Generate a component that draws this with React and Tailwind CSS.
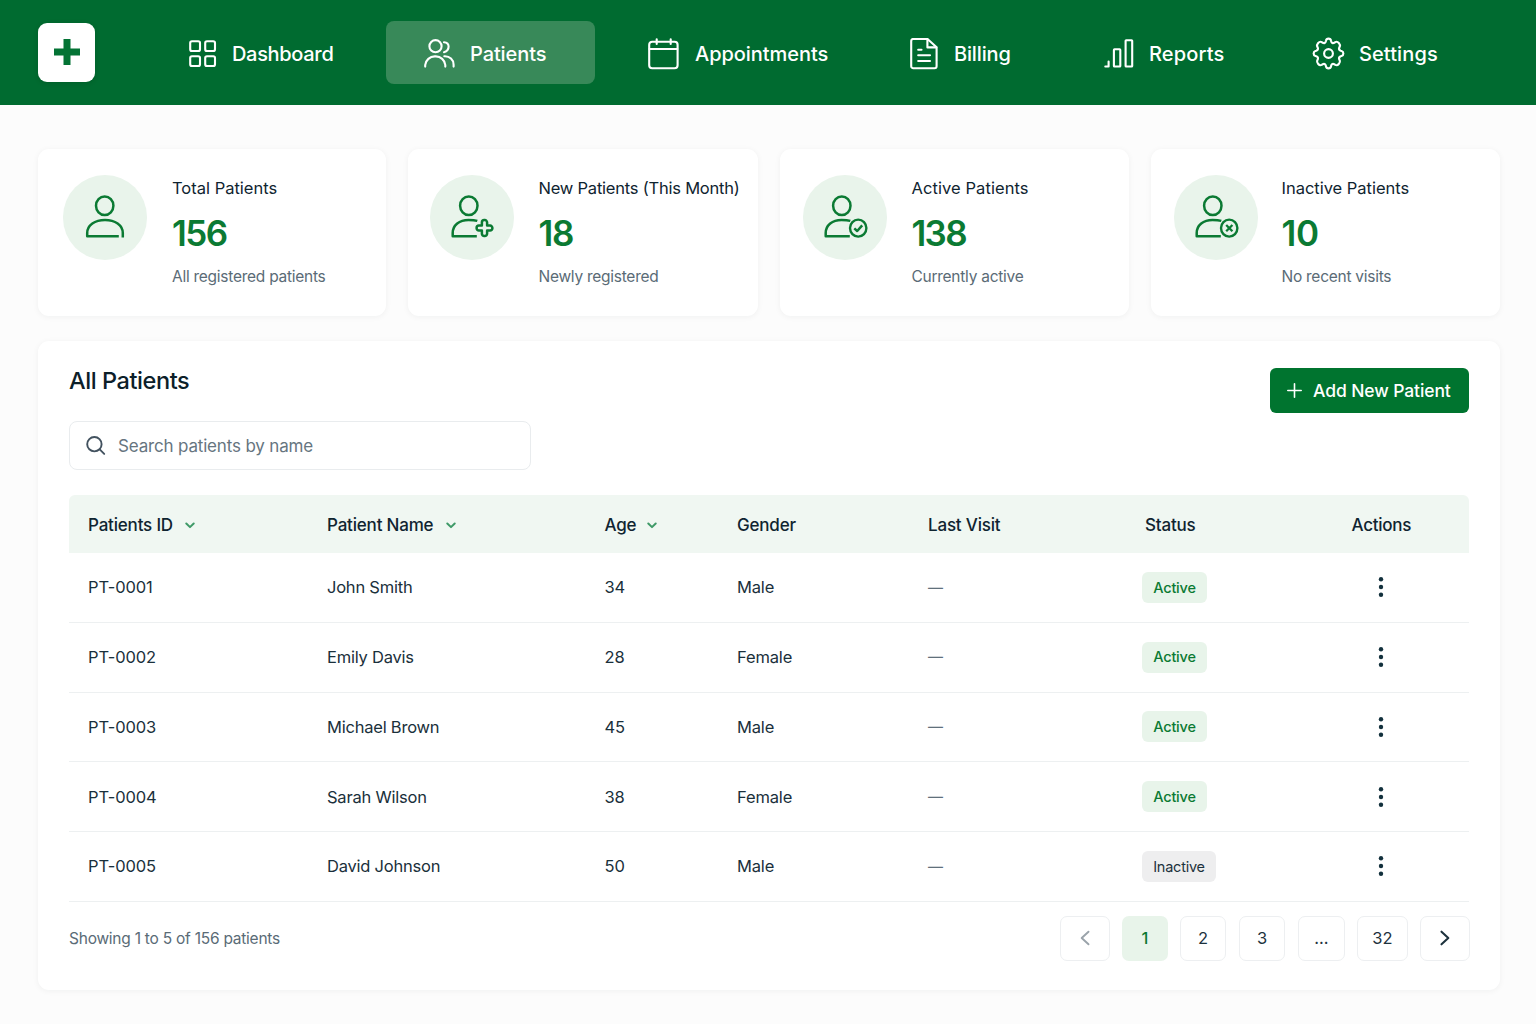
import React from "react";

const line = {
  fill: "none",
  stroke: "currentColor",
  strokeLinecap: "round",
  strokeLinejoin: "round",
};

const DashboardIcon = () => (
  <svg width="28" height="28" viewBox="0 0 28 28" {...line} strokeWidth="2.1">
    <rect x="1.2" y="1.2" width="9.8" height="9.8" rx="1.8" />
    <rect x="16.2" y="1.2" width="9.8" height="9.8" rx="1.8" />
    <rect x="1.2" y="16.2" width="9.8" height="9.8" rx="1.8" />
    <rect x="16.2" y="16.2" width="9.8" height="9.8" rx="1.8" />
  </svg>
);

const PatientsIcon = () => (
  <svg width="31" height="29" viewBox="0 0 31 29" {...line} strokeWidth="2.1">
    <circle cx="11.5" cy="7.2" r="6.1" />
    <path d="M1.2 27.6V26a9.6 9.6 0 0 1 9.6-8.6h1A9.6 9.6 0 0 1 21.3 26v1.6" />
    <path d="M20 3.2c3 .2 4.6 1.9 4.6 4.4 0 2.6-1.6 4.8-4.6 5.6" />
    <path d="M20.3 17.3c5.5-.3 9.3 3.4 9.3 8.4v1.9" />
  </svg>
);

const CalendarIcon = () => (
  <svg width="31" height="32" viewBox="0 0 31 32" {...line} strokeWidth="2.1">
    <rect x="1.2" y="3.7" width="28.4" height="26.5" rx="3" />
    <path d="M1.5 11H29.3M8.7 1.2V5.9M22.7 1.2V5.9" />
  </svg>
);

const BillingIcon = () => (
  <svg width="28" height="32" viewBox="0 0 28 32" {...line} strokeWidth="2.1" className="-ml-[1px]">
    <path d="M3.2 1H17.5L26.6 9.3V28.2a2 2 0 0 1-2 2H3.2a2 2 0 0 1-2-2V3a2 2 0 0 1 2-2Z" />
    <path d="M17.4 1.3V9.4H26.3M8.2 11.7H11.5M8.2 17.2H20M8.2 23H20" />
  </svg>
);

const ReportsIcon = () => (
  <svg width="30" height="29" viewBox="0 0 30 29" {...line} strokeWidth="2.1">
    <path d="M1.3 27.5H4.6V22.5" />
    <rect x="9.9" y="10.3" width="6.4" height="17.2" rx=".6" />
    <rect x="21.6" y="1.2" width="6.6" height="26.3" rx=".6" />
  </svg>
);

const SettingsIcon = () => (
  <svg width="33" height="33" viewBox="0 0 24 24" {...line} strokeWidth="1.55" className="-ml-[1px] -mt-[1px]">
    <path d="M10.15 2.7Q10.4 1.2 12 1.2T13.85 2.7L14 3.3Q14.6 4.9 16.2 4.2L16.9 3.7Q18.3 3 19.5 4.3T20.2 7L19.8 7.7Q19.2 9.4 20.9 10L21.5 10.15Q22.8 10.5 22.8 12T21.5 13.85L20.9 14Q19.2 14.6 19.8 16.3L20.2 17Q20.7 18.4 19.5 19.7T16.9 20.3L16.2 19.8Q14.6 19.1 14 20.7L13.85 21.3Q13.6 22.8 12 22.8T10.15 21.3L10 20.7Q9.4 19.1 7.8 19.8L7.1 20.3Q5.7 21 4.5 19.7T3.8 17L4.2 16.3Q4.8 14.6 3.1 14L2.5 13.85Q1.2 13.5 1.2 12T2.5 10.15L3.1 10Q4.8 9.4 4.2 7.7L3.8 7Q3.3 5.6 4.5 4.3T7.1 3.7L7.8 4.2Q9.4 4.9 10 3.3Z" />
    <circle cx="12" cy="12" r="3.2" />
  </svg>
);

function PersonIcon({ kind }) {
  if (kind === "total") {
    return (
      <svg width="84" height="85" viewBox="0 0 84 85" {...line} strokeWidth="2.5" strokeLinecap="butt">
        <ellipse cx="41.7" cy="30.7" rx="8.7" ry="9.3" />
        <path d="M59.8 62.4V58C59.8 50 52 44.9 42 44.9S24.2 50 24.2 58V61.2H55.8" />
      </svg>
    );
  }
  return (
    <svg width="84" height="85" viewBox="0 0 84 85" {...line} strokeWidth="2.5" strokeLinecap="butt">
      <ellipse cx="38.8" cy="30.7" rx="8.7" ry="9.3" />
      <path d="M47.3 45.9C44.5 45 41.5 44.9 38.5 44.9C29.5 44.9 22.7 50 22.7 58V61.2H46.8" />
      {kind === "new" && (
        <path
          strokeWidth="2.5"
          d="M51.9 47.4a2.3 2.3 0 0 1 2.3-2.3h.6a2.3 2.3 0 0 1 2.3 2.3v3.2h3a2.3 2.3 0 0 1 2.3 2.3v.4a2.3 2.3 0 0 1-2.3 2.3h-3v3.2a2.3 2.3 0 0 1-2.3 2.3h-.6a2.3 2.3 0 0 1-2.3-2.3v-3.2h-3a2.3 2.3 0 0 1-2.3-2.3v-.4a2.3 2.3 0 0 1 2.3-2.3h3Z"
        />
      )}
      {kind !== "new" && <ellipse cx="55.2" cy="53.1" rx="8.2" ry="8.5" strokeWidth="2.4" />}
      {kind === "active" && <path d="M51.3 53.4L54.2 56L59.2 50.4" strokeWidth="2.5" />}
      {kind === "inactive" && <path d="M52.2 50L58.4 56.2M58.4 50L52.2 56.2" strokeWidth="2.3" />}
    </svg>
  );
}

const NAV = [
  { label: "Dashboard", Icon: DashboardIcon, slot: "w-[43px]", track: "tracking-[-0.32px]" },
  { label: "Patients", Icon: PatientsIcon, slot: "w-[46px]", track: "tracking-[-0.1px]", active: true },
  { label: "Appointments", Icon: CalendarIcon, slot: "w-[47px]", track: "tracking-[-0.05px]" },
  { label: "Billing", Icon: BillingIcon, slot: "w-[43px]", track: "tracking-[-0.15px]" },
  { label: "Reports", Icon: ReportsIcon, slot: "w-[45px]", track: "tracking-[0.15px]" },
  { label: "Settings", Icon: SettingsIcon, slot: "w-[46px]", track: "tracking-[0.1px]" },
];

const STATS = [
  { kind: "total", label: "Total Patients", value: "156", note: "All registered patients", pad: "pl-[24.5px]", gap: "ml-[25.5px]", track: "tracking-[0px]", vt: "tracking-[-1.5px]" },
  { kind: "new", label: "New Patients (This Month)", value: "18", note: "Newly registered", pad: "pl-[21.5px]", gap: "ml-[25px]", track: "tracking-[-0.22px]", vt: "tracking-[-1.2px]" },
  { kind: "active", label: "Active Patients", value: "138", note: "Currently active", pad: "pl-[23.2px]", gap: "ml-[24.3px]", track: "tracking-[0.08px]", vt: "tracking-[-1.7px]" },
  { kind: "inactive", label: "Inactive Patients", value: "10", note: "No recent visits", pad: "pl-[22.5px]", gap: "ml-[24px]", track: "tracking-[-0.02px]", vt: "tracking-[-0.3px]" },
];

const ROWS = [
  ["PT-0001", "John Smith", "34", "Male", "Active"],
  ["PT-0002", "Emily Davis", "28", "Female", "Active"],
  ["PT-0003", "Michael Brown", "45", "Male", "Active"],
  ["PT-0004", "Sarah Wilson", "38", "Female", "Active"],
  ["PT-0005", "David Johnson", "50", "Male", "Inactive"],
];

const COLS = "grid grid-cols-[239px_277.5px_132.5px_191px_217px_1fr] items-center pl-[19px]";

const SortIcon = () => (
  <svg width="10" height="7" viewBox="0 0 10 7" {...line} strokeWidth="2" className="text-[#3f9a68]">
    <path d="M1.3 1.5L5 5.1L8.7 1.5" />
  </svg>
);

function Header() {
  return (
    <header className="grid h-[105px] grid-cols-[151px_197px_262px_263px_193px_209px_1fr] items-center bg-[#006b30] pl-[38px] text-white">
      <div className="flex h-[59px] w-[57px] items-center justify-center rounded-[9px] bg-white pb-[2px] text-[#037334] shadow-[0_1px_4px_rgba(0,50,20,0.25)]">
        <svg width="26" height="26" viewBox="0 0 26 26" fill="currentColor">
          <path d="M9.5 0h7v9.5H26v7h-9.5V26h-7v-9.5H0v-7h9.5Z" />
        </svg>
      </div>
      {NAV.map(({ label, Icon, slot, track, active }) => (
        <a
          key={label}
          className={
            active
              ? "flex h-[63px] w-[209px] items-center rounded-[8px] bg-[#388959] pl-[38px] pt-[2px]"
              : "flex h-[63px] items-center pt-[2px]"
          }
        >
          <span className={slot + " shrink-0"}>
            <Icon />
          </span>
          <span className={"whitespace-nowrap pt-[1px] text-[20px] font-medium leading-none " + track}>{label}</span>
        </a>
      ))}
    </header>
  );
}

function StatCard({ s }) {
  return (
    <section className={"flex rounded-[11px] bg-white pt-[26px] shadow-[0_1px_6px_rgba(15,35,30,0.05)] " + s.pad}>
      <div className="h-[85px] w-[84px] shrink-0 rounded-full bg-[#e9f4eb] text-[#0b7a33]">
        <PersonIcon kind={s.kind} />
      </div>
      <div className={"flex flex-col whitespace-nowrap " + s.gap}>
        <span className={"mt-[3px] text-[16.5px] leading-[20px] text-[#0f2430] " + s.track}>{s.label}</span>
        <span className={"mt-[14px] text-[35px] font-[560] leading-[42px] text-[#0b7a33] " + s.vt}>{s.value}</span>
        <span className="mt-[13px] text-[15.5px] leading-[20px] tracking-[-0.26px] text-[#5a6b76]">{s.note}</span>
      </div>
    </section>
  );
}

const pageBox = "flex h-[45px] items-center justify-center rounded-[7px] border border-[#edeff1] text-[16.5px] text-[#1d323d]";

function Pagination() {
  return (
    <nav className="-mr-[1px] flex items-center">
      <button className={pageBox + " w-[50px]"}>
        <svg width="10" height="16" viewBox="0 0 10 16" {...line} strokeWidth="1.9" className="text-[#9aa3aa]">
          <path d="M8.5 1.7L1.7 8L8.5 14.3" />
        </svg>
      </button>
      <button className="ml-[12px] flex h-[45px] w-[46px] items-center justify-center rounded-[7px] bg-[#e8f4ea] text-[16.5px] font-medium text-[#0b7a33]">1</button>
      <button className={pageBox + " ml-[12px] w-[46px]"}>2</button>
      <button className={pageBox + " ml-[13px] w-[46px]"}>3</button>
      <button className={pageBox + " ml-[13px] w-[47px]"}>...</button>
      <button className={pageBox + " ml-[12px] w-[51px]"}>32</button>
      <button className={pageBox + " ml-[12px] w-[50px]"}>
        <svg width="10" height="16" viewBox="0 0 10 16" {...line} strokeWidth="2.1">
          <path d="M1.5 1.7L8.3 8L1.5 14.3" />
        </svg>
      </button>
    </nav>
  );
}

function PatientsPanel() {
  return (
    <section className="mx-[38px] mt-[25px] h-[649px] w-[1462px] rounded-[11px] bg-white pl-[31px] pr-[31px] pt-[26px] shadow-[0_1px_6px_rgba(15,35,30,0.05)]">
      <div className="flex items-start justify-between">
        <div>
          <h2 className="text-[23.5px] font-medium leading-[28px] tracking-[-0.43px] text-[#0c2029]">All Patients</h2>
          <label className="mt-[26px] flex h-[49px] w-[462px] items-center rounded-[8px] border border-[#e9ecee] pl-[16px]">
            <svg width="20" height="20" viewBox="0 0 20 20" {...line} strokeWidth="1.9" className="text-[#42525f]">
              <circle cx="8.4" cy="8.2" r="7.2" />
              <path d="M13.7 13.4L18.2 17.9" />
            </svg>
            <span className="ml-[12px] pt-[2px] text-[17px] tracking-[-0.17px] text-[#66757f]">Search patients by name</span>
          </label>
        </div>
        <button className="mt-[1px] flex h-[45px] w-[199px] items-center rounded-[6px] bg-[#00742f] pl-[17px] text-white">
          <svg width="15" height="15" viewBox="0 0 15 15" {...line} strokeWidth="1.6">
            <path d="M7.5 .8V14.2M.8 7.5H14.2" />
          </svg>
          <span className="ml-[11px] whitespace-nowrap pt-[1px] text-[17.5px] font-medium tracking-[-0.1px]">Add New Patient</span>
        </button>
      </div>

      <div className="mt-[25px] w-[1400px]">
        <div className={COLS + " h-[58px] rounded-t-[6px] bg-[#f0f7f2] pt-[3px] text-[17px] font-medium tracking-[-0.19px] text-[#0f2430]"}>
          <div className="flex items-center gap-[12px]">Patients ID<SortIcon /></div>
          <div className="flex items-center gap-[13px]">Patient Name<SortIcon /></div>
          <div className="flex items-center gap-[10.5px]">Age<SortIcon /></div>
          <div>Gender</div>
          <div>Last Visit</div>
          <div className="grid grid-cols-[206.5px_1fr]">
            <span>Status</span>
            <span className="tracking-[-0.25px]">Actions</span>
          </div>
        </div>
        {ROWS.map(([id, name, age, gender, status]) => (
          <div key={id} className={COLS + " h-[69.75px] border-b border-[#edf0f1] text-[16.5px] tracking-[-0.22px] text-[#1a303b]"}>
            <div className="pt-[0.5px] tracking-[-0.12px]">{id}</div>
            <div className="pt-[0.5px]">{name}</div>
            <div className="pt-[0.5px] tracking-[-0.1px]">{age}</div>
            <div className="pt-[0.5px] tracking-[-0.15px]">{gender}</div>
            <div className="pt-[1px] text-[15px] text-[#61707b]">—</div>
            <div className="flex items-center">
              <span
                className={
                  status === "Active"
                    ? "-ml-[3px] flex h-[31px] w-[65px] items-center justify-center rounded-[6px] bg-[#e8f4ea] text-[14.5px] font-[450] text-[#0b7a33]"
                    : "-ml-[3px] flex h-[31px] w-[74px] items-center justify-center rounded-[6px] bg-[#eeeeef] text-[14.5px] text-[#1d323d]"
                }
              >
                {status}
              </span>
              <svg width="6" height="20" viewBox="0 0 6 20" fill="#12303c" className={status === "Active" ? "ml-[170.5px]" : "ml-[161.5px]"}>
                <circle cx="3" cy="2.3" r="2.2" />
                <circle cx="3" cy="10" r="2.2" />
                <circle cx="3" cy="17.7" r="2.2" />
              </svg>
            </div>
          </div>
        ))}
        <div className="mt-[14px] flex items-center justify-between">
          <span className="pt-[1px] text-[15.5px] tracking-[-0.24px] text-[#5a6b76]">Showing 1 to 5 of 156 patients</span>
          <Pagination />
        </div>
      </div>
    </section>
  );
}

export default function App() {
  return (
    <div className="h-[1024px] w-[1536px] overflow-hidden bg-[#fcfcfc] font-['Inter',sans-serif]">
      <Header />
      <main>
        <div className="ml-[38px] mt-[44px] grid h-[167px] grid-cols-[348px_350px_349px_349px] gap-x-[22px]">
          {STATS.map((s) => (
            <StatCard key={s.kind} s={s} />
          ))}
        </div>
        <PatientsPanel />
      </main>
    </div>
  );
}
